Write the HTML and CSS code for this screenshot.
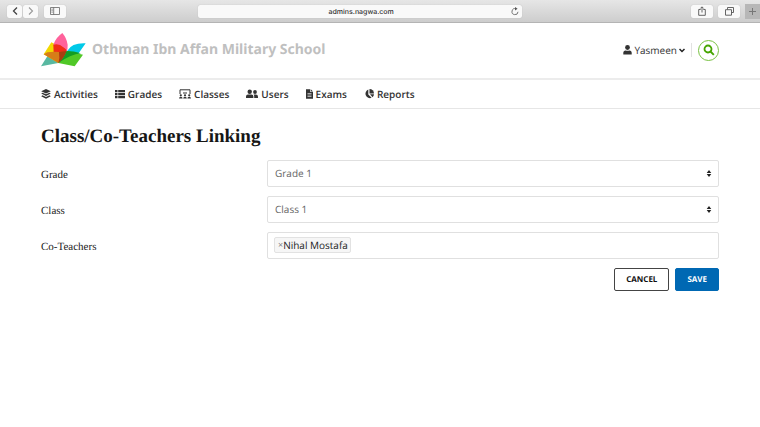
FILE: index.html
```html
<!DOCTYPE html>
<html lang="en">
<head>
<meta charset="utf-8">
<meta name="viewport" content="width=device-width, initial-scale=1">
<title>Class/Co-Teachers Linking</title>
<link rel="stylesheet" href="styles.css">
</head>
<body>
<div class="browser">
  <div class="browser-group">
    <div class="browser-pair">
      <button class="browser-button browser-button-narrow" type="button" aria-label="Back"><svg width="6" height="10" viewBox="0 0 6 10"><path d="M5 1.5 1.5 5 5 8.5" fill="none" stroke="#444" stroke-width="1.3"/></svg></button>
      <button class="browser-button browser-button-narrow" type="button" aria-label="Forward"><svg width="6" height="10" viewBox="0 0 6 10"><path d="M1 1.5 4.500 5 1 8.500" fill="none" stroke="#999" stroke-width="1.1"/></svg></button>
    </div>
    <button class="browser-button" type="button" aria-label="Sidebar"><svg width="10" height="8" viewBox="0 0 10 8"><path d="M.5.5h9v7h-9zM3.700.5v7M1.500 2.200h1.200M1.500 3.700h1.200M1.500 5.200h1.200" fill="none" stroke="#666" stroke-width=".8"/></svg></button>
  </div>
  <div class="address">
    <input class="address-input" type="text" value="admins.nagwa.com" aria-label="Address">
    <button class="address-reload" type="button" aria-label="Reload"><svg width="8" height="9" viewBox="0 0 8 9"><path d="M5 1.800A3 3 0 1 0 7 4.800" fill="none" stroke="#666" stroke-width=".9"/><path d="M4 0l2.600 1.800L4 3.600z" fill="#555"/></svg></button>
  </div>
  <div class="browser-group browser-group-end">
    <button class="browser-button" type="button" aria-label="Share"><svg width="8" height="10" viewBox="0 0 8 10"><path d="M2.700 3.500H.7v5.800h6.600V3.500h-2M4 6.500V1M2.300 2.500 4 .8l1.700 1.700" fill="none" stroke="#555" stroke-width=".9"/></svg></button>
    <button class="browser-button" type="button" aria-label="Show tabs"><svg width="9" height="9" viewBox="0 0 9 9"><path d="M2.500 2.500v-2h6v5h-2M.5 2.700h6v5.500h-6z" fill="none" stroke="#555" stroke-width=".9"/></svg></button>
    <button class="new-tab" type="button" aria-label="New tab"><svg width="7" height="7" viewBox="0 0 7 7"><path d="M3.500 0v7M0 3.500h7" stroke="#777" stroke-width="1"/></svg></button>
  </div>
</div>

<header class="header">
  <a class="brand" href="#">
    <svg class="logo" viewBox="0 0 135 102" aria-hidden="true">
      <path d="M20 68 0 100 52 90 66 57Q40 58 20 68z" fill="#58b8a1"/>
      <path d="M31 28 46 35Q66 58 52 90L8 64z" fill="#f2d800"/>
      <path d="M64 0Q45 13 37 35 61 55 52 90 83 61 80 35 77 15 64 0z" fill="#ff629b"/>
      <path d="M134 31Q93 29 79 53L52 90 112 62z" fill="#00c9e8"/>
      <path d="M52 90 78 54 126 65 101 100z" fill="#50c827"/>
      <path d="M37 35Q54 30 67 43 79 50 76 56 69 75 52 90 59 61 37 35z" fill="#f02d16"/>
      <path d="M37 35Q50 42 55 60L52 90 38 60z" fill="#f02d16"/>
      <path d="M19 58Q35 55 54 57 58 76 52 90L8 64z" fill="#d77d18"/>
      <path d="M54 57 77 54Q70 75 52 90 58 74 54 57z" fill="#a73e12"/>
      <path d="M77 54Q98 54 120 61 88 65 52 90 70 75 77 54z" fill="#129c25"/>
    </svg>
    <span class="school">Othman Ibn Affan Military School</span>
  </a>
  <div class="account">
    <button class="user" type="button">
      <svg width="9" height="10" viewBox="0 0 9 10" fill="#333" aria-hidden="true"><circle cx="4.500" cy="2.500" r="2.400"/><path d="M.3 9.500V8Q.3 5.400 2.600 5.400q1.900.8 3.800 0Q8.700 5.400 8.700 8v1.500z"/></svg>
      <span>Yasmeen</span>
      <svg width="6" height="5" viewBox="0 0 6 5" aria-hidden="true"><path d="M.5 1 3 3.500 5.500 1" fill="none" stroke="#222" stroke-width="1.500"/></svg>
    </button>
    <button class="search" type="button" aria-label="Search"><svg width="12" height="12" viewBox="0 0 12 12"><circle cx="5" cy="5" r="3.500" fill="none" stroke="#45a500" stroke-width="1.800"/><path d="m7.500 7.500 3.300 3.300" stroke="#45a500" stroke-width="1.900"/></svg></button>
  </div>
</header>

<nav class="nav" aria-label="Main">
  <a class="nav-link" href="#"><svg width="10" height="10" viewBox="0 0 10 10" fill="#333"><path d="M5 0 9.800 2.200 5 4.400.2 2.200z"/><path d="M1.500 3.700 5 5.300l3.500-1.600 1.300.9L5 7 .2 4.600z"/><path d="M1.500 6.300 5 7.900l3.500-1.600 1.300.9L5 9.700.2 7.200z"/></svg>Activities</a>
  <a class="nav-link" href="#"><svg width="10" height="10" viewBox="0 0 10 10" fill="#333"><path d="M0 1h2.500v2.200H0zM3.200 1H10v2.200H3.200zM0 4h2.500v2.200H0zM3.200 4H10v2.200H3.200zM0 7h2.500v2.200H0zM3.200 7H10v2.200H3.200z"/></svg>Grades</a>
  <a class="nav-link" href="#"><svg width="12" height="10" viewBox="0 0 12 10" fill="#333"><path d="M1 5V.8h10V5" fill="none" stroke="#333"/><circle cx="1.800" cy="6.300" r="1.100"/><circle cx="6" cy="6.300" r="1.100"/><circle cx="10.200" cy="6.300" r="1.100"/><path d="M0 9.500q0-1.700 1.800-1.700t1.800 1.700zM4.200 9.500q0-1.700 1.800-1.700t1.800 1.700zM8.400 9.500q0-1.700 1.800-1.700T12 9.500zM4 3.600h4v1H4z"/></svg>Classes</a>
  <a class="nav-link" href="#"><svg width="12" height="10" viewBox="0 0 12 10" fill="#333"><circle cx="3.700" cy="2.800" r="2.200"/><circle cx="9" cy="3" r="1.900"/><path d="M0 9V7.500q0-2 2-2h3.400q2 0 2 2V9zM8.200 9V7.200q0-.9-.6-1.600h2.200q2.200 0 2.200 2.200V9z"/></svg>Users</a>
  <a class="nav-link" href="#"><svg width="7" height="10" viewBox="0 0 7 10"><path d="M0 .3h4.200V3H7v6.700H0z" fill="#333"/><path d="M4.800.3 7 2.400H4.800z" fill="#333"/><path d="M1.500 4.500h4M1.500 6h4M1.500 7.500h4" stroke="#fff" stroke-width=".6"/></svg>Exams</a>
  <a class="nav-link" href="#"><svg width="10" height="10" viewBox="0 0 10 10" fill="#333"><path d="M4.300.5v4.900l3.300 3.400A4.300 4.300 0 1 1 4.300.5z"/><path d="M5.500 0A4.500 4.500 0 0 1 10 4.500H5.500z"/><path d="M6 5.300h4q-.1 1.700-1.400 2.900z"/></svg>Reports</a>
</nav>

<main class="main">
  <h1 class="title">Class/Co-Teachers Linking</h1>
  <form class="form">
    <div class="row">
      <label class="label" for="grade">Grade</label>
      <div class="field"><select class="control select" id="grade"><option>Grade 1</option></select><svg class="sort" viewBox="0 0 4 7" aria-hidden="true"><path d="M2 0 4.300 3H-.3zM2 7-.3 4h4.600z" fill="#222"/></svg></div>
    </div>
    <div class="row">
      <label class="label" for="class">Class</label>
      <div class="field"><select class="control select" id="class"><option>Class 1</option></select><svg class="sort" viewBox="0 0 4 7" aria-hidden="true"><path d="M2 0 4.300 3H-.3zM2 7-.3 4h4.600z" fill="#222"/></svg></div>
    </div>
    <div class="row">
      <label class="label" for="teachers">Co-Teachers</label>
      <div class="control tags"><span class="tag"><button class="tag-remove" type="button" aria-label="Remove Nihal Mostafa">×</button>Nihal Mostafa</span><input class="tag-input" id="teachers" type="text"></div>
    </div>
    <div class="actions">
      <button class="button" type="button">CANCEL</button>
      <button class="button button-primary" type="submit">SAVE</button>
    </div>
  </form>
</main>
</body>
</html>
```

FILE: styles.css
```css
* { box-sizing: border-box; }

body {
  margin: 0;
  background: #fff;
  color: #333;
  font: 10px/14px "Open Sans", "Noto Sans", sans-serif;
  text-rendering: geometricPrecision;
}

button, input, select { margin: 0; font: inherit; color: inherit; text-rendering: inherit; }
button { padding: 0; border: 0; background: none; }
svg { display: block; flex: none; }
a { color: inherit; text-decoration: none; }

.browser {
  display: grid;
  grid-template-columns: 4fr minmax(0, 324px) 5fr;
  align-items: center;
  height: 23px;
  padding-left: 7px;
  background: linear-gradient(#e6e6e6, #cdcdcd);
  border-bottom: 1px solid #b4b4b4;
}
.browser-group { display: flex; align-items: center; gap: 6px; }
.browser-group-end { justify-content: flex-end; gap: 5px; }
.browser-pair { display: flex; gap: 1px; }
.browser-button {
  display: flex;
  align-items: center;
  justify-content: center;
  width: 22px;
  height: 13px;
  border-radius: 2px;
  background: #f9f9f9;
  box-shadow: 0 0 1px #aaa;
}
.browser-button-narrow { width: 15px; }
.new-tab {
  display: flex;
  align-items: center;
  justify-content: center;
  align-self: flex-end;
  width: 15px;
  height: 15px;
  background: #b7b7b7;
}
.address {
  display: flex;
  align-items: center;
  height: 13px;
  padding: 0 3px 0 14px;
  border-radius: 2px;
  background: #f9f9f9;
  box-shadow: 0 0 1px #aaa;
}
.address-input {
  flex: 1;
  min-width: 0;
  height: 13px;
  padding: 0;
  border: 0;
  background: none;
  font: 500 7px/13px Inter, sans-serif;
  text-align: center;
}

.header {
  display: flex;
  align-items: center;
  justify-content: space-between;
  padding: 10px 41px 11px;
  border-bottom: 2px solid #ececec;
}
.brand { display: flex; align-items: center; gap: 6px; }
.logo { width: 45px; height: 34px; }
.school { color: #bfc0c0; font: bold 14px/20px "Noto Sans", sans-serif; }
.account { display: flex; align-items: center; }
.user {
  display: flex;
  align-items: center;
  gap: 2px;
  padding-right: 6px;
  border-right: 1px solid #e2e2e2;
}
.search {
  display: flex;
  align-items: center;
  justify-content: center;
  width: 21px;
  height: 21px;
  margin-left: 6px;
  border: 1px solid #79c143;
  border-radius: 50%;
}

.nav {
  display: flex;
  gap: 17px;
  padding: 7px 41px;
  border-bottom: 1px solid #e6e6e6;
  font-weight: 600;
}
.nav-link { display: flex; align-items: center; gap: 3px; }

.main { padding: 16px 41px; }
.title {
  margin: 0 0 11px;
  color: #161616;
  font: bold 19px/24px "Liberation Serif", serif;
}
.form { display: grid; gap: 9px; }
.row { display: grid; grid-template-columns: 1fr 2fr; align-items: center; }
.label { padding-top: 2px; color: #222; font: 11px/14px "Liberation Serif", serif; }
.field { position: relative; }
.control {
  width: 100%;
  height: 27px;
  border: 1px solid #e0e0e0;
  border-radius: 2px;
  background: #fff;
}
.select { display: block; padding: 0 20px 1px 7px; appearance: none; color: #666; }
.sort { position: absolute; top: 10px; right: 8px; width: 4px; height: 7px; overflow: visible; pointer-events: none; }
.tags { display: flex; align-items: center; padding: 0 6px 1px; }
.tag {
  display: flex;
  align-items: center;
  padding: 0 2px 0 3px;
  border: 1px solid #e2e2e2;
  border-radius: 2px;
  background: #f6f6f6;
  color: #222;
}
.tag-remove { color: #777; font-size: 9px; }
.tag-input { flex: 1; min-width: 0; border: 0; outline: 0; background: none; }

.actions { display: flex; justify-content: flex-end; gap: 6px; }
.button {
  height: 23px;
  padding: 0 11px;
  border: 1px solid #444;
  border-radius: 2px;
  background: #fff;
  color: #111;
  font-size: 8px;
  font-weight: 700;
}
.button-primary { border-color: #0068b3; background: #0068b3; color: #fff; }
```
